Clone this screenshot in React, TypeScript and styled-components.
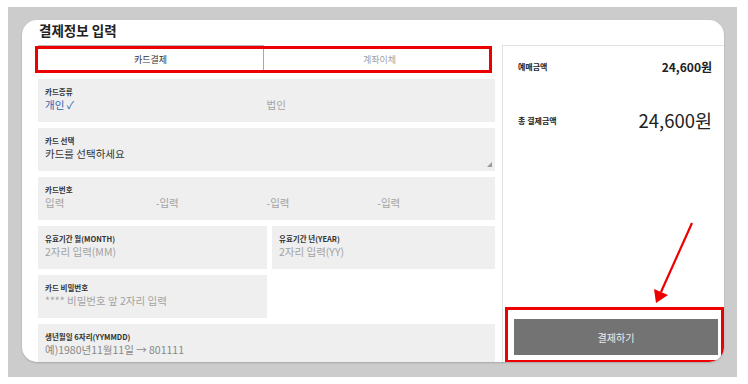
import styled, { createGlobalStyle } from "styled-components";

const GlobalStyle = createGlobalStyle`
  html, body {
    margin: 0;
    padding: 0;
    background: #ffffff;
  }
  body {
    font-family: "Noto Sans CJK KR", "Noto Sans", sans-serif;
    color: #333;
  }
  * {
    box-sizing: border-box;
  }
`;

const Page = styled.div`
  width: 748px;
  height: 384px;
  padding: 7px 0 0 8px;
  background: #ffffff;
`;

const Frame = styled.div`
  width: 729px;
  height: 370px;
  padding: 13px 0 0 14px;
  background: #cccccc;
`;

const Card = styled.div`
  width: 702px;
  height: 342px;
  padding-left: 16px;
  background: #ffffff;
  border-radius: 15px;
  overflow: hidden;
  box-shadow: 0 1px 2px rgba(0, 0, 0, 0.18);
  display: flex;
  flex-direction: column;
`;

const Title = styled.h2`
  flex-shrink: 0;
  margin: 0;
  height: 25px;
  padding-left: 1px;
  font-size: 13.5px;
  line-height: 21px;
  font-weight: 700;
  color: #222;
`;

const Body = styled.div`
  flex: 1;
  min-height: 0;
  display: flex;
  gap: 7px;
`;

const FormColumn = styled.div`
  width: 457px;
  display: flex;
  flex-direction: column;
  gap: 6px;
  & > * {
    flex-shrink: 0;
  }
`;

const TabWrap = styled.div`
  position: relative;
  margin-bottom: 1px;
`;

const TabBar = styled.div`
  height: 27px;
  display: grid;
  grid-template-columns: 226px 1fr;
`;

const Tab = styled.div<{ $active?: boolean }>`
  display: flex;
  align-items: center;
  justify-content: center;
  font-size: 9px;
  color: ${(p) => (p.$active ? "#333" : "#a0a0a0")};
  background: #ffffff;
  border-top: 1px solid ${(p) => (p.$active ? "#b8b8b8" : "transparent")};
  border-right: ${(p) => (p.$active ? "1px solid #a8a8a8" : "none")};
`;

const Highlight = styled.div`
  position: absolute;
  left: -3px;
  right: 3px;
  top: 1px;
  bottom: -1px;
  border: 3px solid #ee0000;
  pointer-events: none;
`;

const Field = styled.div`
  height: 43px;
  padding: 8px 7px 0;
  background: #efefef;
  position: relative;
`;

const Label = styled.div`
  font-size: 7.5px;
  line-height: 10px;
  font-weight: 700;
  color: #333;
`;

const Value = styled.div<{ $tone?: "blue" | "dark" | "muted" | "soft" }>`
  font-size: 10.5px;
  line-height: 16px;
  color: ${(p) =>
    p.$tone === "blue"
      ? "#2d5fb5"
      : p.$tone === "dark"
      ? "#333"
      : p.$tone === "soft"
      ? "#888"
      : "#a3a3a3"};
  white-space: nowrap;
`;

const Cols = styled.div<{ $n: number }>`
  display: grid;
  grid-template-columns: repeat(${(p) => p.$n}, 1fr);
`;

const ResizeGrip = styled.div`
  position: absolute;
  right: 3px;
  bottom: 4px;
  width: 0;
  height: 0;
  border-left: 5px solid transparent;
  border-bottom: 5px solid #9a9a9a;
`;

const HalfRow = styled.div`
  display: grid;
  grid-template-columns: 229px 1fr;
  gap: 5px;
`;

const Summary = styled.aside`
  position: relative;
  flex: 1;
  border-left: 1px solid #e2e2e2;
  border-top: 1px solid #e2e2e2;
  display: flex;
  flex-direction: column;
`;

const SumRow = styled.div<{ $top: number }>`
  display: flex;
  align-items: center;
  justify-content: space-between;
  height: 24px;
  margin-top: ${(p) => p.$top}px;
  padding: 0 12px 0 15px;
`;

const SumLabel = styled.span`
  font-size: 8px;
  font-weight: 700;
  color: #222;
`;

const SumPrice = styled.span<{ $big?: boolean }>`
  font-size: ${(p) => (p.$big ? "18.5px" : "12px")};
  font-weight: ${(p) => (p.$big ? 400 : 700)};
  color: #222;
`;

const PayBox = styled.div`
  margin: auto 0 -1px 2px;
  height: 56px;
  padding: 9px 3px 4px 6px;
  border: 3px solid #ee0000;
`;

const PayButton = styled.button`
  width: 100%;
  height: 36px;
  border: none;
  background: #737373;
  color: #eeeeee;
  font-family: inherit;
  font-size: 10px;
  cursor: pointer;
`;

const Arrow = styled.svg`
  position: absolute;
  left: 0;
  top: 0;
  pointer-events: none;
`;

export default function App() {
  return (
    <>
      <GlobalStyle />
      <Page>
        <Frame>
          <Card>
            <Title>결제정보 입력</Title>
            <Body>
              <FormColumn>
                <TabWrap>
                  <TabBar>
                    <Tab $active>카드결제</Tab>
                    <Tab>계좌이체</Tab>
                  </TabBar>
                  <Highlight />
                </TabWrap>

                <Field>
                  <Label>카드종류</Label>
                  <Cols $n={2}>
                    <Value $tone="blue">개인 ✓</Value>
                    <Value>법인</Value>
                  </Cols>
                </Field>

                <Field>
                  <Label>카드 선택</Label>
                  <Value $tone="dark">카드를 선택하세요</Value>
                  <ResizeGrip />
                </Field>

                <Field>
                  <Label>카드번호</Label>
                  <Cols $n={4}>
                    <Value>입력</Value>
                    <Value>-입력</Value>
                    <Value>-입력</Value>
                    <Value>-입력</Value>
                  </Cols>
                </Field>

                <HalfRow>
                  <Field>
                    <Label>유효기간 월(MONTH)</Label>
                    <Value>2자리 입력(MM)</Value>
                  </Field>
                  <Field>
                    <Label>유효기간 년(YEAR)</Label>
                    <Value>2자리 입력(YY)</Value>
                  </Field>
                </HalfRow>

                <HalfRow>
                  <Field>
                    <Label>카드 비밀번호</Label>
                    <Value>**** 비밀번호 앞 2자리 입력</Value>
                  </Field>
                </HalfRow>

                <Field>
                  <Label>생년월일 6자리(YYMMDD)</Label>
                  <Value $tone="soft">예)1980년11월11일 → 801111</Value>
                </Field>
              </FormColumn>

              <Summary>
                <SumRow $top={8}>
                  <SumLabel>예매금액</SumLabel>
                  <SumPrice>24,600원</SumPrice>
                </SumRow>
                <SumRow $top={30}>
                  <SumLabel>총 결제금액</SumLabel>
                  <SumPrice $big>24,600원</SumPrice>
                </SumRow>
                <PayBox>
                  <PayButton>결제하기</PayButton>
                </PayBox>
                <Arrow width="222" height="317" viewBox="0 0 222 317">
                  <line x1="189" y1="177" x2="158" y2="246" stroke="#ee0000" strokeWidth="2.2" />
                  <polygon points="153,257 165,249 151,243" fill="#ee0000" />
                </Arrow>
              </Summary>
            </Body>
          </Card>
        </Frame>
      </Page>
    </>
  );
}
